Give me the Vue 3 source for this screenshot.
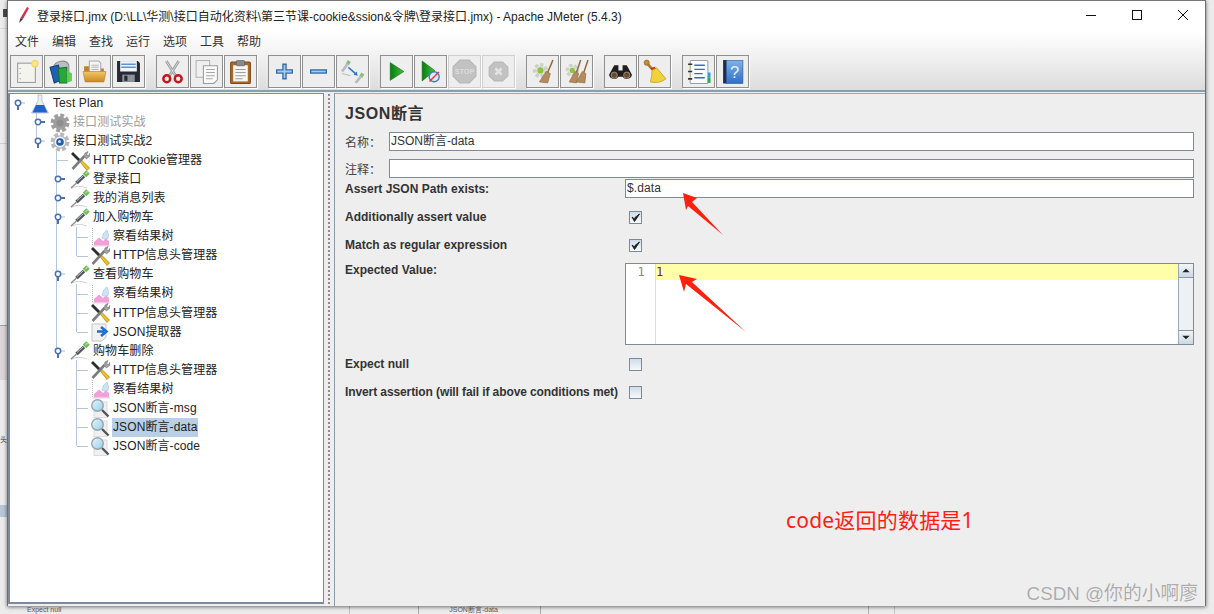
<script setup>
const menus = ['文件', '编辑', '查找', '运行', '选项', '工具', '帮助']
const toolGroups = [
  ['new', 'books', 'open', 'save'],
  ['cut', 'copy', 'paste'],
  ['plus', 'minus', 'toggle'],
  ['run', 'runnp', 'stop*', 'halt*'],
  ['clear', 'clearall'],
  ['binoc', 'broom'],
  ['notes', 'help']
]
const tree = [
  { t: 'Test Plan', l: 0, h: 'open', i: 'flask' },
  { t: '接口测试实战', l: 1, h: 'closed', i: 'geargrey', off: true },
  { t: '接口测试实战2', l: 1, h: 'open', i: 'gear' },
  { t: 'HTTP Cookie管理器', l: 2, i: 'tools' },
  { t: '登录接口', l: 2, h: 'closed', i: 'dropper' },
  { t: '我的消息列表', l: 2, h: 'closed', i: 'dropper' },
  { t: '加入购物车', l: 2, h: 'open', i: 'dropper' },
  { t: '察看结果树', l: 3, i: 'graph' },
  { t: 'HTTP信息头管理器', l: 3, i: 'tools' },
  { t: '查看购物车', l: 2, h: 'open', i: 'dropper' },
  { t: '察看结果树', l: 3, i: 'graph' },
  { t: 'HTTP信息头管理器', l: 3, i: 'tools' },
  { t: 'JSON提取器', l: 3, i: 'extract' },
  { t: '购物车删除', l: 2, h: 'open', i: 'dropper' },
  { t: 'HTTP信息头管理器', l: 3, i: 'tools' },
  { t: '察看结果树', l: 3, i: 'graph' },
  { t: 'JSON断言-msg', l: 3, i: 'lens' },
  { t: 'JSON断言-data', l: 3, i: 'lens', sel: true },
  { t: 'JSON断言-code', l: 3, i: 'lens' }
]
</script>

<template>
  <div class="page">
    <svg class="sprite" aria-hidden="true">
      <defs>
        <linearGradient id="gGreen" x1="0" x2="1" y1="0" y2="0"><stop offset="0" stop-color="#0a7a12"/><stop offset="1" stop-color="#3fc43a"/></linearGradient>
        <linearGradient id="gFold" x1="0" x2="0" y1="0" y2="1"><stop offset="0" stop-color="#f3c765"/><stop offset="1" stop-color="#c98a25"/></linearGradient>
        <linearGradient id="gBlue" x1="0" x2="0" y1="0" y2="1"><stop offset="0" stop-color="#7fb0e8"/><stop offset="1" stop-color="#2f6fc4"/></linearGradient>
        <linearGradient id="gLens" x1="0" x2="1" y1="0" y2="1"><stop offset="0" stop-color="#e8f6ff"/><stop offset="1" stop-color="#8fd0ea"/></linearGradient>
      </defs>
      <symbol id="new" viewBox="0 0 24 24"><rect x="3.500" y="4" width="17" height="18.500" fill="#f4f4ee" stroke="#9a9a9a"/><circle cx="6" cy="9" r=".7" fill="#aaa"/><circle cx="6" cy="14" r=".7" fill="#aaa"/><circle cx="6" cy="19" r=".7" fill="#aaa"/><circle cx="20" cy="4.500" r="3" fill="#ffe680" stroke="#eed35a"/></symbol>
      <symbol id="books" viewBox="0 0 24 24"><path d="M5 8 C7 1 18 0 20 6 L20 14 L6 14Z" fill="#b9bec4" stroke="#858b92"/><path d="M2 8 L10 6 L13 20 L6 23Z" fill="#1d62b0" stroke="#123f78"/><path d="M10 9 L18 8 L18 23 L11 23Z" fill="#27a83d" stroke="#1a7029"/><path d="M18 11 L23 14 L23 21 L18 23Z" fill="#5ed04f"/></symbol>
      <symbol id="open" viewBox="0 0 24 24"><path d="M2 7 H9 L11 9 H21 V12 H2Z" fill="#b98327"/><path d="M7 2 H16 L18 4 V13 H7Z" fill="#f5f5f5" stroke="#aaa"/><path d="M9 6 H16 M9 8 H16 M9 10 H16" stroke="#b5b5b5"/><path d="M1 12 H23 L21 22 H3Z" fill="url(#gFold)" stroke="#b57f28" stroke-width=".6"/></symbol>
      <symbol id="save" viewBox="0 0 24 24"><path d="M1 2 H21 L23 4 V22 H1Z" fill="#272a33"/><rect x="4" y="2" width="16" height="10" fill="#f2f4f6"/><path d="M5 5 H19 M5 8 H19" stroke="#5f8fd0" stroke-width="1.500"/><rect x="6" y="15" width="12" height="7" fill="#8f939a"/><rect x="8" y="16" width="3" height="5" fill="#272a33"/></symbol>
      <symbol id="cut" viewBox="0 0 24 24"><path d="M6 2 L15 16 M18 2 L9 16" stroke="#9b9b9b" stroke-width="2.600"/><path d="M6 2 L15 16 M18 2 L9 16" stroke="#eee" stroke-width=".7"/><circle cx="6.500" cy="19" r="3.300" fill="none" stroke="#c8141c" stroke-width="2.400"/><circle cx="17.500" cy="19" r="3.300" fill="none" stroke="#c8141c" stroke-width="2.400"/></symbol>
      <symbol id="copy" viewBox="0 0 24 24"><rect x="2" y="1.500" width="13" height="16" fill="#f0f0f0" stroke="#b3b3b3"/><path d="M9 6.500 H22.500 V20 L19 23.500 H9Z" fill="#fafafa" stroke="#9a9a9a"/><path d="M11.500 10 H20 M11.500 13 H20 M11.500 16 H20 M11.500 19 H18" stroke="#a8a8a8"/></symbol>
      <symbol id="paste" viewBox="0 0 24 24"><rect x="2.500" y="3" width="19" height="20.500" rx="1" fill="#a9692a" stroke="#7c4a1a"/><rect x="5" y="6" width="14" height="15.500" fill="#f6f6f6"/><rect x="8" y="1.500" width="8" height="5" rx="1" fill="#8a8a8a" stroke="#555" stroke-width=".6"/><path d="M7 10 H17 M7 13 H17 M7 16 H17 M7 19 H14" stroke="#9d9d9d"/></symbol>
      <symbol id="plus" viewBox="0 0 24 24"><path d="M10.500 5 H13.500 V10.500 H19.500 V13.500 H13.500 V19 H10.500 V13.500 H4.500 V10.500 H10.500Z" fill="#a8cbec" stroke="#336ca8" stroke-width="1.300"/></symbol>
      <symbol id="minus" viewBox="0 0 24 24"><rect x="4.500" y="10.500" width="15" height="3" fill="#a8cbec" stroke="#336ca8" stroke-width="1.300"/></symbol>
      <symbol id="toggle" viewBox="0 0 24 24"><path d="M9 2 L7 5 M22 14 L20 17" stroke="#8bc07a" stroke-width="3.500"/><path d="M7 5 L2 12 M20 17 L15 23" stroke="#b7bcbc" stroke-width="2.500"/><path d="M8 8 L16 15" stroke="#2a78d8" stroke-width="1.400"/><path d="M17 16 L13 15 L16 12Z" fill="#2a78d8"/><path d="M2 14 L10 16" stroke="#bbb"/></symbol>
      <symbol id="run" viewBox="0 0 24 24"><path d="M6 3.500 L19 12 L6 20.500Z" fill="url(#gGreen)" stroke="#0b6a12" stroke-width=".6"/></symbol>
      <symbol id="runnp" viewBox="0 0 24 24"><path d="M4 2 L16 11 L4 21Z" fill="url(#gGreen)" stroke="#0b6a12" stroke-width=".6"/><circle cx="15.500" cy="17" r="4.800" fill="#dfeaf6" stroke="#3a78c8" stroke-width="1.300"/><path d="M11 21.500 L20 12.500" stroke="#e83a3a" stroke-width="1.400"/></symbol>
      <symbol id="stop" viewBox="0 0 24 24"><path d="M7.500 1 H16.500 L23 7.500 V16.500 L16.500 23 H7.500 L1 16.500 V7.500Z" fill="#c2c2c2" stroke="#b5b5b5"/></symbol>
      <symbol id="halt" viewBox="0 0 24 24"><path d="M8 3 H16 L21 8 V16 L16 21 H8 L3 16 V8Z" fill="#c2c2c2" stroke="#b8b8b8"/><path d="M9 9 L15 15 M15 9 L9 15" stroke="#e4e4e4" stroke-width="2.400"/></symbol>
      <symbol id="clear" viewBox="0 0 24 24"><circle cx="10" cy="11" r="5.500" fill="#e4e4de" stroke="#cfcfc9" stroke-width="3.500" stroke-dasharray="3 2"/><circle cx="10" cy="11" r="3" fill="#8cc63e"/><path d="M22 1 L17 13" stroke="#8a6a42" stroke-width="1.500"/><path d="M15.500 12 L19.500 14 L17 23 L9 22Z" fill="#b58a5c" stroke="#8a6a42" stroke-width=".6"/></symbol>
      <symbol id="clearall" viewBox="0 0 24 24"><circle cx="8" cy="11" r="5" fill="#e4e4de" stroke="#cfcfc9" stroke-width="3" stroke-dasharray="3 2"/><circle cx="8" cy="11" r="2.500" fill="#8cc63e"/><path d="M16 1 L12 13 M23 1 L19 13" stroke="#8a6a42" stroke-width="1.400"/><path d="M10.500 12 L14 14 L12 23 L5 22Z" fill="#b58a5c" stroke="#8a6a42" stroke-width=".6"/><path d="M17.500 12 L21 14 L20 23 L12 22Z" fill="#b58a5c" stroke="#8a6a42" stroke-width=".6"/></symbol>
      <symbol id="binoc" viewBox="0 0 24 24"><path d="M6 6 H10 V11 H14 V6 H18 L23 15 A5 5 0 0 1 14 17 H10 A5 5 0 0 1 1 15Z" fill="#1f1f1f"/><circle cx="6" cy="15.500" r="3" fill="#6b4a2a" stroke="#b5b5b5" stroke-width=".6"/><circle cx="18" cy="15.500" r="3" fill="#6b4a2a" stroke="#b5b5b5" stroke-width=".6"/></symbol>
      <symbol id="broom" viewBox="0 0 24 24"><circle cx="4.500" cy="3.500" r="2.500" fill="#c48a3a" stroke="#8a5e20" stroke-width=".6"/><path d="M5.500 5 L10 10" stroke="#a87428" stroke-width="2.400"/><path d="M8 9 L12 7.500 L14 10 L12 12Z" fill="#d22"/><path d="M9.500 11 L14 8.500 L23 19 Q17 24 8 22 Q10 16 9.500 11Z" fill="#f2d23a" stroke="#b89a14" stroke-width=".7"/></symbol>
      <symbol id="notes" viewBox="0 0 24 24"><rect x="4" y="1.500" width="17" height="22" rx="1" fill="#fbfbfb" stroke="#9aa0a8"/><path d="M8 6 H18 M8 10 H18 M8 14 H16 M8 18 H18" stroke="#2a6fd8" stroke-width="1.300"/><path d="M2 5 H6 M2 12 H6 M2 19 H6" stroke="#333" stroke-width="1.600"/><rect x="21" y="13" width="2.500" height="5" fill="#2a9fd8"/><rect x="21" y="18" width="2.500" height="5" fill="#2aa84a"/></symbol>
      <symbol id="help" viewBox="0 0 24 24"><rect x="3" y="1" width="4" height="22.500" fill="#1c2c44"/><rect x="6" y="1.500" width="16" height="22" fill="url(#gBlue)" stroke="#2a5a9c" stroke-width=".6"/></symbol>
      <symbol id="flask" viewBox="0 0 20 20"><path d="M8 1 H12 V7 L18.500 19 H1.500 L8 7Z" fill="#e9eef5" stroke="#a9b2bd" stroke-width=".7"/><path d="M6 11 H14 L17.500 18.500 H2.500Z" fill="#1f62c8"/></symbol>
      <symbol id="gearbase" viewBox="0 0 20 20"><circle cx="10" cy="10" r="7.300" fill="none" stroke="currentColor" stroke-width="4.400" stroke-dasharray="3.600 2.130"/><circle cx="10" cy="10" r="6.800" fill="currentColor"/></symbol>
      <symbol id="geargrey" viewBox="0 0 20 20"><use href="#gearbase" width="20" height="20" color="#9e9e9e"/><circle cx="10" cy="10" r="3.600" fill="#8e8e8e"/></symbol>
      <symbol id="gear" viewBox="0 0 20 20"><use href="#gearbase" width="20" height="20" color="#b8b8b8"/><circle cx="10" cy="10" r="5.400" fill="#eef2f6"/><circle cx="10" cy="10" r="3.800" fill="#1f5fb8"/><circle cx="9.500" cy="9.500" r="1.500" fill="#cfe0f6"/></symbol>
      <symbol id="tools" viewBox="0 0 20 20"><path d="M1 3 L3 1 L11 9 L9 11Z" fill="#2e2e2e"/><path d="M9.500 10 L11 8.500 L19.500 17 L17 19.500Z" fill="#f0c020" stroke="#8f7208" stroke-width=".6"/><path d="M2.500 18 L14.500 5" stroke="#7d7d7d" stroke-width="2.600"/><path d="M14 5.500 L15 2 L18 .5 L16.500 4 L19 4.500 L19.500 2.500 L20 5 L16.500 8Z" fill="#a4a4a4" stroke="#5e5e5e" stroke-width=".5"/></symbol>
      <symbol id="dropper" viewBox="0 0 20 20"><path d="M1 18.500 Q8 14.500 17 18" fill="none" stroke="#d2d2d2"/><path d="M14.500 5.500 L18 2" stroke="#6fbd54" stroke-width="5"/><path d="M15.500 4 L18 1.500" stroke="#acdf93" stroke-width="1.300"/><path d="M14 6 L6.500 13" stroke="#51585e" stroke-width="3.600"/><path d="M13 6 L7 11.500" stroke="#c4cace" stroke-width="1"/><path d="M6.500 13 L1 18" stroke="#8a8a8a" stroke-width="1.300"/></symbol>
      <symbol id="graph" viewBox="0 0 20 20"><path d="M2.500 1 V19 H20" fill="none" stroke="#b8b8b8" stroke-dasharray="1 1"/><path d="M4 18.500 V15 L9 10.500 L13 14 L16 11.500 L19 14 V18.500Z" fill="#f2a0da"/><path d="M12 11 Q13 5 17 3 Q19.500 7 18 11.500 Q14 13 12 11Z" fill="#cfe2f8" stroke="#9ab8d8" stroke-width=".5"/></symbol>
      <symbol id="extract" viewBox="0 0 20 20"><path d="M2 2 H16 V15 L12 19 H2Z" fill="#f2f2f2" stroke="#c4c4c4"/><path d="M7 9.500 H14 M11 5 L16.500 9.500 L11 14" fill="none" stroke="#1a6fd0" stroke-width="2.600"/></symbol>
      <symbol id="lens" viewBox="0 0 20 20"><rect x="4" y="4" width="13" height="15.500" fill="#f0f0f0" stroke="#dcdcdc"/><path d="M12 12 L18.500 18.500" stroke="#555" stroke-width="2.400"/><circle cx="7.500" cy="7.500" r="5.800" fill="url(#gLens)" stroke="#9aa4ac" stroke-width="1.400"/></symbol>
      <symbol id="tw-open" viewBox="0 0 16 19"><path d="M8 9 H15" stroke="#a8bedd"/><path d="M8 12 V16" stroke="#4a70b0" stroke-width="2"/><circle cx="8" cy="9" r="2.700" fill="#fff" stroke="#4a70b0" stroke-width="1.500"/></symbol>
      <symbol id="tw-closed" viewBox="0 0 16 19"><path d="M10 9 H15" stroke="#4a70b0" stroke-width="2"/><circle cx="8" cy="9" r="2.700" fill="#fff" stroke="#4a70b0" stroke-width="1.500"/></symbol>
      <symbol id="check" viewBox="0 0 13 13"><path d="M3 6 L5.500 10.500 L10.500 3 L6 6.500 L5.500 8Z" fill="#222" stroke="#222" stroke-width="1"/></symbol>
    </svg>

    <span class="side-text">头</span>

    <div class="window">
      <div class="chrome">
        <header class="titlebar">
          <svg class="app-icon" viewBox="0 0 12 18"><path d="M9 1 L11 2 L5 13 L2.500 12Z" fill="#d8304a"/><path d="M2.500 12 L5 13 L1 17Z" fill="#333"/></svg>
          <span class="title">登录接口.jmx (D:\LL\华测\接口自动化资料\第三节课-cookie&amp;ssion&amp;令牌\登录接口.jmx) - Apache JMeter (5.4.3)</span>
          <div class="win-ctrls">
            <svg class="ctrl" viewBox="0 0 46 30"><path d="M18 15.500 H28" stroke="#111"/></svg>
            <svg class="ctrl" viewBox="0 0 46 30"><rect x="18.500" y="10.500" width="9" height="9" fill="none" stroke="#111"/></svg>
            <svg class="ctrl" viewBox="0 0 46 30"><path d="M18 10 L28 20 M28 10 L18 20" stroke="#111"/></svg>
          </div>
        </header>
        <nav class="menubar"><span v-for="m in menus" :key="m" class="menu">{{ m }}</span></nav>
        <div class="toolbar">
          <div v-for="(g, gi) in toolGroups" :key="gi" class="tgroup">
            <span v-for="b in g" :key="b" class="tbtn" :class="{ off: b.endsWith('*') }">
              <svg class="ticon" viewBox="0 0 24 24">
                <use :href="'#' + b.replace('*', '')" width="24" height="24"/>
                <text v-if="b === 'stop*'" x="12" y="14.600" text-anchor="middle" font-size="7" font-weight="700" font-family="Liberation Sans" fill="#dcdcdc">STOP</text>
                <text v-if="b === 'help'" x="14" y="18" text-anchor="middle" font-size="16" font-family="Liberation Sans" fill="#e8f2ff">?</text>
              </svg>
            </span>
          </div>
        </div>
      </div>

      <main class="main">
        <section class="tree">
          <svg class="guides" width="316" height="400">
            <g stroke="#b3c6de" fill="none">
              <path d="M28.500 9 V47 M48.500 57 V257 M68.500 133 V162 M68.500 190 V238 M68.500 266 V352"/>
              <path d="M49 66.500 H60 M69 143.500 H80 M69 162.500 H80 M69 200.500 H80 M69 219.500 H80 M69 238.500 H80 M69 276.500 H80 M69 295.500 H80 M69 314.500 H80 M69 333.500 H80 M69 352.500 H80"/>
            </g>
          </svg>
          <div v-for="(r, i) in tree" :key="i" class="row" :class="'lvl' + r.l">
            <span class="twisty"><svg v-if="r.h" class="tw"><use :href="'#tw-' + r.h" width="16" height="19"/></svg></span>
            <svg class="ticon-sm" viewBox="0 0 20 20"><use :href="'#' + r.i" width="20" height="20"/></svg>
            <span class="rtext" :class="{ off: r.off, sel: r.sel }">{{ r.t }}</span>
          </div>
        </section>
        <div class="splitter"></div>
        <section class="panel">
          <h1 class="ptitle">JSON断言</h1>
          <div class="nrow"><label class="nlabel">名称：</label><div class="input tight">JSON断言-data</div></div>
          <div class="nrow"><label class="nlabel">注释：</label><div class="input"></div></div>
          <div class="form">
            <div class="frow h19"><label class="blabel">Assert JSON Path exists:</label><div class="input">$.data</div></div>
            <div class="frow h28 gap5"><label class="blabel">Additionally assert value</label><span class="cb"><svg class="ck" viewBox="0 0 13 13"><use href="#check" width="13" height="13"/></svg></span></div>
            <div class="frow h28"><label class="blabel">Match as regular expression</label><span class="cb"><svg class="ck" viewBox="0 0 13 13"><use href="#check" width="13" height="13"/></svg></span></div>
            <div class="frow top"><label class="blabel lh">Expected Value:</label>
              <div class="editor">
                <div class="gutter">1</div>
                <div class="code"><div class="curline">1</div></div>
                <div class="scroll">
                  <span class="sbtn"><svg viewBox="0 0 14 14"><path d="M3 9 L7 5 L11 9Z" fill="#222"/></svg></span>
                  <span class="strack"></span>
                  <span class="sbtn"><svg viewBox="0 0 14 14"><path d="M3 5 L7 9 L11 5Z" fill="#222"/></svg></span>
                </div>
              </div>
            </div>
            <div class="frow h28 gap5"><label class="blabel">Expect null</label><span class="cb"></span></div>
            <div class="frow h28"><label class="blabel narrow">Invert assertion (will fail if above conditions met)</label><span class="cb"></span></div>
          </div>
          <svg class="arrows" viewBox="0 0 871 513" width="871" height="513">
            <path d="M348 99 L362 104 L357 108 L388 141 L353 112 L351 116Z" fill="#ff2010"/>
            <path d="M344 181 L362 185 L357 188 L411 238 L351 190 L349 198Z" fill="#ff2010"/>
          </svg>
          <div class="note">code返回的数据是1</div>
          <div class="mark">CSDN @你的小啊廖</div>
        </section>
      </main>
    </div>
    <div class="under"><span class="tiny">Expect null</span><span class="tiny mid">JSON断言-data</span></div>
  </div>
</template>

<style>
html, body { margin: 0; padding: 0; }
</style>

<style scoped>
.page {
  width: 1214px; height: 614px; overflow: hidden; position: relative; box-sizing: border-box;
  padding-left: 7px; padding-right: 8px;
  font-family: "Liberation Sans", "Noto Sans CJK SC", sans-serif; font-size: 12px; color: #222;
  background:
    linear-gradient(#4a4a4a, #4a4a4a) 3px 9px / 4px 8px no-repeat,
    linear-gradient(#d8d8d8, #d8d8d8) 0 28px / 7px 1px no-repeat,
    linear-gradient(#cfcfcf, #cfcfcf) 0 143px / 7px 1px no-repeat,
    linear-gradient(#9aa0a4, #9aa0a4) 0 325px / 7px 1px no-repeat,
    linear-gradient(#ddd6d6, #ddd6d6) 0 326px / 7px 54px no-repeat,
    linear-gradient(#b8c6d8, #b8c6d8) 0 505px / 7px 12px no-repeat,
    linear-gradient(#c0c0c0, #c0c0c0) 349px 606px / 1px 8px no-repeat,
    linear-gradient(#a8a8a8, #a8a8a8) 418px 606px / 1px 8px no-repeat,
    linear-gradient(#a8a8a8, #a8a8a8) 540px 606px / 1px 8px no-repeat,
    linear-gradient(#b0b0b0, #b0b0b0) 868px 606px / 1px 8px no-repeat,
    linear-gradient(#c8c8c8, #c8c8c8) 894px 606px / 1px 8px no-repeat,
    #ececec;
}
.sprite { position: absolute; width: 0; height: 0; }
.side-text { position: absolute; left: 0; top: 435px; font-size: 7px; line-height: 10px; color: #333; }
.window {
  height: 606px; display: flex; flex-direction: column; box-sizing: border-box;
  border: 1px solid #6e6e6e; border-top-color: #777; border-bottom: 0; background: #eee;
  box-shadow: 0 1px 4px rgba(0,0,0,.55);
}
.chrome {
  height: 91px; flex: none; display: flex; flex-direction: column; box-sizing: border-box;
  background: linear-gradient(#fff 0, #fff 31px, #dcdcdc 90px);
  border-bottom: 2px solid #8c9eae;
}
.titlebar { height: 30px; flex: none; display: flex; align-items: center; padding-left: 10px; margin-top: -1px; }
.app-icon { width: 12px; height: 18px; flex: none; }
.title { margin-left: 7px; font-family: "Liberation Sans", "Noto Sans CJK SC", sans-serif; font-size: 12px; color: #222; white-space: nowrap; }
.win-ctrls { margin-left: auto; margin-right: -1px; display: flex; }
.ctrl { width: 46px; height: 30px; display: block; }
.menubar { height: 24px; flex: none; box-sizing: border-box; padding: 0 0 4px 7px; display: flex; align-items: center; gap: 13px; }
.menu { color: #333; font-size: 12px; }
.toolbar { display: flex; gap: 11px; padding-left: 2px; margin-top: 1px; }
.tgroup { display: flex; gap: 1px; }
.tbtn {
  width: 33px; height: 33px; box-sizing: border-box; display: flex; align-items: center; justify-content: center;
  border: 1px solid #8f8f8f; box-shadow: 1px 1px 0 #fff; background: #eeeeee;
}
.tbtn.off { border-color: #cfcfcf; }
.ticon { width: 25px; height: 25px; }
.main { flex: 1; min-height: 0; display: flex; background: #eee; padding-top: 1px; }
.tree {
  width: 316px; flex: none; box-sizing: border-box; position: relative; background: #fff;
  border-left: 2px solid #7b8b9b; border-top: 1px solid #7b8b9b; border-right: 1px solid #7b8b9b; border-bottom: 2px solid #7b8b9b;
  margin-bottom: 2px; font-size: 12px;
}
.guides { position: absolute; left: -2px; top: 0; }
.row { height: 19.060px; display: flex; align-items: center; position: relative; white-space: nowrap; }
.lvl1 { padding-left: 20px; }
.lvl2 { padding-left: 40px; }
.lvl3 { padding-left: 60px; }
.twisty { width: 16px; height: 19px; flex: none; }
.tw { width: 16px; height: 19px; display: block; }
.ticon-sm { width: 20px; height: 20px; margin-left: 4px; flex: none; overflow: visible; }
.rtext { margin-left: 2px; padding: 0 1px; height: 19px; line-height: 19px; color: #222; letter-spacing: .1px; }
.rtext.off { color: #9c9c9c; }
.rtext.sel { background: #b8cfe5; }
.splitter {
  width: 11px; flex: none; box-sizing: border-box; border-right: 1px solid #8a9aaa;
  background: radial-gradient(circle at 5px 2px, #8e8e8e 0 .9px, transparent 1.100px) 0 0 / 11px 4px repeat-y;
}
.panel { flex: 1; min-width: 0; position: relative; padding: 10px 11px 0 10px; box-sizing: border-box; border-top: 1px solid #9aa8b4; }
.ptitle { margin: 0 0 8px; font-size: 16px; line-height: 20px; font-weight: 700; color: #333; letter-spacing: .6px; }
.nrow { display: flex; align-items: center; height: 19px; margin-bottom: 8px; }
.nlabel { width: 44px; flex: none; color: #444; font-size: 12px; }
.input {
  flex: 1; height: 19px; box-sizing: border-box; background: #fff; border: 1px solid #7e8a96;
  padding-left: 1px; line-height: 17px; font-size: 12px; color: #333; letter-spacing: .1px;
}
.tight { letter-spacing: 0; }
.form { margin-top: -7px; }
.frow { display: flex; align-items: center; }
.h19 { height: 19px; }
.h28 { height: 28px; }
.top { align-items: flex-start; margin-top: 4px; }
.gap5 { margin-top: 5px; }
.blabel { width: 280px; flex: none; font-size: 12px; font-weight: 700; color: #333; white-space: nowrap; }
.narrow { letter-spacing: -.1px; }
.lh { line-height: 12px; padding-top: 1px; }
.cb {
  width: 13px; height: 13px; margin-left: 4px; box-sizing: border-box; display: block;
  border: 1px solid #7b8a9a; background: linear-gradient(#cfdcec, #f7f9fb);
}
.ck { width: 13px; height: 13px; display: block; margin: -1px; }
.editor { flex: 1; height: 82px; box-sizing: border-box; display: flex; background: #fff; border: 1px solid #7e8a96; }
.gutter { width: 30px; flex: none; border-right: 1px solid #ddd; text-align: center; box-sizing: border-box; padding-left: 1px; font: 12px/16px "DejaVu Sans Mono", monospace; color: #888; }
.code { flex: 1; min-width: 0; }
.curline { height: 16px; background: #ffffaa; font: 12px/16px "DejaVu Sans Mono", monospace; color: #6a10b0; }
.scroll { width: 15px; flex: none; display: flex; flex-direction: column; border-left: 1px solid #9aa8b4; box-sizing: border-box; }
.sbtn { height: 14px; flex: none; background: linear-gradient(#f2f5f8, #cdd8e4); border-bottom: 1px solid #8a98a6; box-sizing: border-box; }
.sbtn:last-child { border-top: 1px solid #8a98a6; border-bottom: 0; }
.sbtn svg { display: block; width: 14px; height: 13px; }
.strack { flex: 1; background: #eef1f4; }
.arrows { position: absolute; left: 0; top: 0; pointer-events: none; }
.note { position: absolute; left: 451px; top: 412px; font-family: "Noto Sans", "Noto Sans CJK SC", sans-serif; font-size: 21px; line-height: 28px; letter-spacing: .2px; color: #ff2010; white-space: nowrap; }
.mark { position: absolute; right: 7px; top: 488px; font-family: "Liberation Sans", "Noto Sans CJK SC", sans-serif; font-size: 18.800px; line-height: 24px; color: #acacac; text-shadow: 0 0 1px #fff; white-space: nowrap; }
.under { height: 8px; display: flex; overflow: hidden; padding-left: 20px; font-size: 7px; line-height: 8px; color: #555; }
.tiny { white-space: nowrap; }
.mid { margin-left: 388px; }
</style>
